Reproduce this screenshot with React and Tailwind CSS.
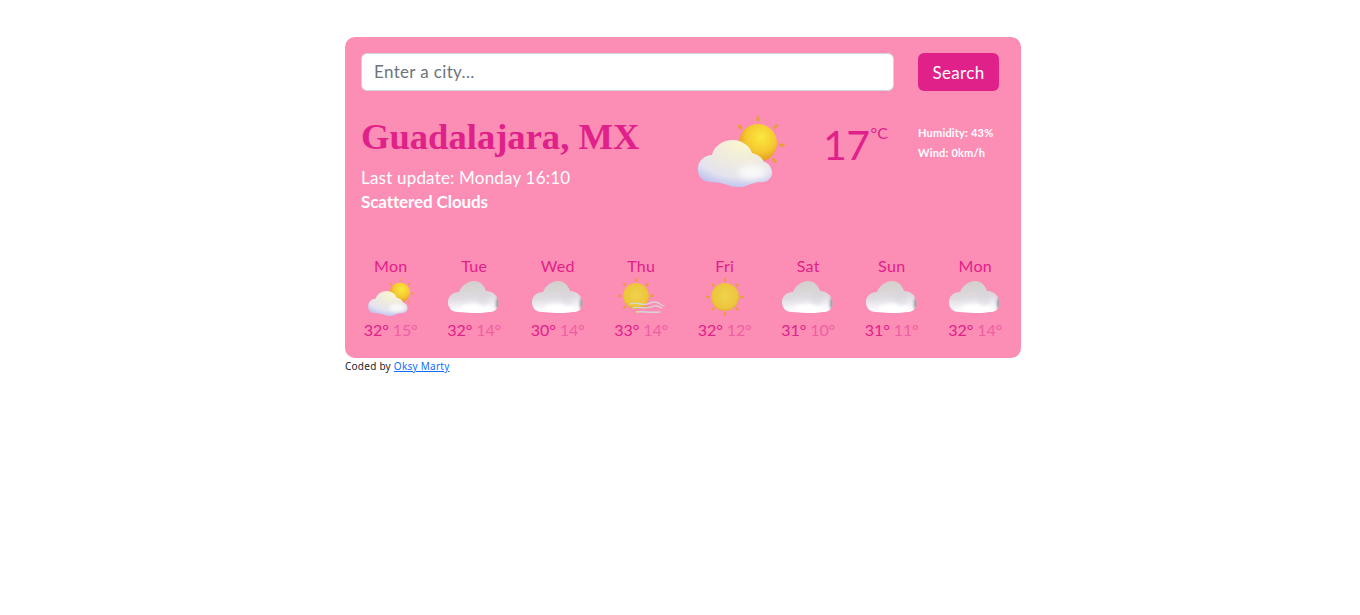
import React from "react";

function Defs({ id }) {
  return (
    <defs>
      <radialGradient id={`${id}sun`} cx="0.58" cy="0.34" r="0.72">
        <stop offset="0" stopColor="#fbe93f" />
        <stop offset="0.55" stopColor="#f4c82f" />
        <stop offset="1" stopColor="#dd8a1e" />
      </radialGradient>
      <radialGradient id={`${id}plainsun`} cx="0.5" cy="0.45" r="0.6">
        <stop offset="0" stopColor="#f1d24c" />
        <stop offset="0.75" stopColor="#ecc53c" />
        <stop offset="1" stopColor="#dca52e" />
      </radialGradient>
      <radialGradient id={`${id}warm`} cx="0.62" cy="0.08" r="1">
        <stop offset="0" stopColor="#fbf6cf" />
        <stop offset="0.4" stopColor="#efebdf" />
        <stop offset="0.72" stopColor="#e4e3ee" />
        <stop offset="1" stopColor="#b4b8f0" />
      </radialGradient>
      <linearGradient id={`${id}grey`} x1="0.4" y1="0" x2="0.5" y2="1">
        <stop offset="0" stopColor="#d2cfcb" />
        <stop offset="0.5" stopColor="#dedadf" />
        <stop offset="0.82" stopColor="#f8f6fb" />
        <stop offset="1" stopColor="#ffffff" />
      </linearGradient>
      <clipPath id={`${id}clip`}>
        <path d="M10 31 C 3 31 0 26 0 21 C 0 15 5 11 11 11 C 14 4 20 0 26 0 C 32 0 36 4 38 10 C 44 10 49 14 50 19 C 52 26 48 31 41 31 C 35 32 30 32 25 32 C 20 32 15 31 10 31 Z" />
      </clipPath>
      <filter id={`${id}soft`} x="-10%" y="-10%" width="120%" height="120%">
        <feGaussianBlur stdDeviation="0.45" />
      </filter>
      <filter id={`${id}glow`} x="-50%" y="-50%" width="200%" height="200%">
        <feGaussianBlur stdDeviation="3" />
      </filter>
      <filter id={`${id}glow2`} x="-100%" y="-100%" width="300%" height="300%">
        <feGaussianBlur stdDeviation="1.5" />
      </filter>
    </defs>
  );
}

const WARM_CLOUD =
  "M20 72 C 11 72 7 64 8 57 C 9 50 15 45 22 45 C 24 36 33 30 43 30 C 52 30 60 36 62 43 C 67 44 72 47 74 52 C 79 53 82 58 82 63 C 82 69 76 73 70 72 C 65 72 62 74 58 75 C 52 78 44 78 38 75 C 32 73 26 72 20 72 Z";

function Rays({ cx, cy, d, rx, ry, angles }) {
  return (
    <g>
      {angles.map((a) => {
        const t = (a * Math.PI) / 180;
        const x = cx + Math.cos(t) * d;
        const y = cy + Math.sin(t) * d;
        return (
          <ellipse key={a} cx={x} cy={y} rx={rx} ry={ry} fill="#e5a03a" transform={`rotate(${a} ${x} ${y})`} />
        );
      })}
    </g>
  );
}

const ALL = [-90, -45, 0, 45, 90, 135, 180, -135];

function SunCloud({ id, w, h }) {
  return (
    <svg width={w} height={h} viewBox="0 0 100 85" className="block">
      <Defs id={id} />
      <g filter={`url(#${id}soft)`}>
        <Rays cx={68} cy={33} d={24} rx={3} ry={1.6} angles={[-90, -138, -43, 5, 47]} />
        <circle cx="68" cy="33" r="19" fill={`url(#${id}sun)`} />
        <path d={WARM_CLOUD} fill={`url(#${id}warm)`} />
        <ellipse cx="62" cy="62" rx="14" ry="7" fill="#ffffff" opacity="0.75" filter={`url(#${id}glow)`} />
      </g>
    </svg>
  );
}

function GreyCloud({ id }) {
  return (
    <svg width="52" height="32" viewBox="0 0 52 32" className="block overflow-visible">
      <Defs id={id} />
      <g filter={`url(#${id}soft)`}>
        <g clipPath={`url(#${id}clip)`}>
          <rect x="0" y="0" width="52" height="32" fill={`url(#${id}grey)`} />
          <ellipse cx="51" cy="23" rx="3" ry="7" fill="#6f717e" opacity="0.75" filter={`url(#${id}glow2)`} />
          <ellipse cx="27" cy="27" rx="15" ry="4" fill="#ffffff" filter={`url(#${id}glow2)`} />
          <ellipse cx="35" cy="18" rx="6" ry="7" fill="#d4d1de" opacity="0.35" filter={`url(#${id}glow2)`} />
        </g>
      </g>
    </svg>
  );
}

function Sun({ id }) {
  return (
    <svg width="38" height="38" viewBox="0 0 38 38" className="block">
      <Defs id={id} />
      <g filter={`url(#${id}soft)`}>
        <Rays cx={19} cy={19} d={17} rx={2} ry={1.2} angles={ALL} />
        <circle cx="19" cy="19" r="14" fill={`url(#${id}plainsun)`} />
      </g>
    </svg>
  );
}

function SunWind({ id }) {
  return (
    <svg width="52" height="38" viewBox="0 0 52 38" className="block">
      <Defs id={id} />
      <g filter={`url(#${id}soft)`}>
        <Rays cx={21} cy={18} d={16} rx={1.9} ry={1.2} angles={ALL} />
        <circle cx="21" cy="18" r="13" fill={`url(#${id}plainsun)`} />
        <g fill="none" stroke="#d6d6d8" strokeWidth="1.3" strokeLinecap="round">
          <path d="M15 26 C 21 23 26 28 32 26 C 36 25 40 22 45 26 L 49 28" />
          <path d="M18 30 C 25 28 32 32 39 28 C 42 27 45 29 47 30" />
          <path d="M21 34 C 28 33 35 35 45 34" />
        </g>
      </g>
    </svg>
  );
}

const days = [
  { d: "Mon", hi: "32°", lo: "15°", k: "suncloud" },
  { d: "Tue", hi: "32°", lo: "14°", k: "cloud" },
  { d: "Wed", hi: "30°", lo: "14°", k: "cloud" },
  { d: "Thu", hi: "33°", lo: "14°", k: "wind" },
  { d: "Fri", hi: "32°", lo: "12°", k: "sun" },
  { d: "Sat", hi: "31°", lo: "10°", k: "cloud" },
  { d: "Sun", hi: "31°", lo: "11°", k: "cloud" },
  { d: "Mon", hi: "32°", lo: "14°", k: "cloud" },
];

function DayIcon({ k, id }) {
  if (k === "suncloud") return <SunCloud id={id} w={53} h={45} />;
  if (k === "cloud") return <GreyCloud id={id} />;
  if (k === "sun") return <Sun id={id} />;
  return <SunWind id={id} />;
}

export default function App() {
  return (
    <div className="ml-[345px] w-[676px] pt-[37px] font-['Lato','Noto_Sans',sans-serif]">
      <div className="h-[321px] rounded-[10px] bg-[#fc8db4] pt-4 px-1">
        <form className="flex px-3 gap-6 h-[38px]" onSubmit={(e) => e.preventDefault()}>
          <input
            placeholder="Enter a city..."
            className="w-[533px] h-[38px] rounded-md border border-[#ced4da] bg-white px-3 pb-[2px] text-[17px] tracking-[0.35px] text-[#212529] placeholder:text-[#6c757d] outline-none"
          />
          <button className="w-[81px] h-[38px] rounded-md bg-[#e0218a] text-[17px] tracking-[0.3px] text-white pt-[1px]">
            Search
          </button>
        </form>

        <div className="flex px-3 h-[131px] pt-[22px]">
          <div className="w-[329px] shrink-0">
            <h1 className="font-['Liberation_Serif',serif] font-bold text-[36.6px] leading-[48px] text-[#e0218a] whitespace-nowrap">
              Guadalajara, MX
            </h1>
            <p className="mt-[5px] text-[17px] leading-[24px] tracking-[0.2px] text-white whitespace-nowrap">
              Last update: Monday 16:10
            </p>
            <p className="text-[17px] leading-[24px] font-bold tracking-[-0.1px] text-white whitespace-nowrap">
              Scattered Clouds
            </p>
          </div>
          <div className="w-[132px] shrink-0 -mt-[3px]">
            <SunCloud id="main" w={100} h={85} />
          </div>
          <div className="w-[96px] shrink-0 flex items-start text-[#e0218a] pt-[4px] pl-[1px]">
            <span className="text-[41px] leading-[56px] tracking-[-0.5px]">17</span>
            <span className="text-[16px] leading-[24px] mt-[4px] ml-[1px]">°C</span>
          </div>
          <div className="text-[11px] leading-[20px] font-bold text-white whitespace-nowrap tracking-[0.2px] pt-[10px]">
            <div>Humidity: 43%</div>
            <div>Wind: 0km/h</div>
          </div>
        </div>

        <div className="grid grid-cols-8 mt-[32px]">
          {days.map((x, i) => (
            <div key={i} className="flex flex-col items-center">
              <div className="text-[16px] leading-[24px] tracking-[0.3px] text-[#e0218a]">{x.d}</div>
              <div className="h-[38px] w-full flex items-center justify-center">
                <DayIcon k={x.k} id={`d${i}`} />
              </div>
              <div className="mt-[2px] text-[16px] leading-[24px] tracking-[-0.1px] whitespace-nowrap">
                <span className="text-[#e0218a]">{x.hi}</span>{" "}
                <span className="text-[#ee5fa3]">{x.lo}</span>
              </div>
            </div>
          ))}
        </div>
      </div>
      <p className="text-[10px] leading-[16px] tracking-[0.25px] text-[#212529] font-['Noto_Sans',sans-serif]">
        Coded by{" "}
        <a href="#" className="text-[#0d6efd] underline">
          Oksy Marty
        </a>
      </p>
    </div>
  );
}
